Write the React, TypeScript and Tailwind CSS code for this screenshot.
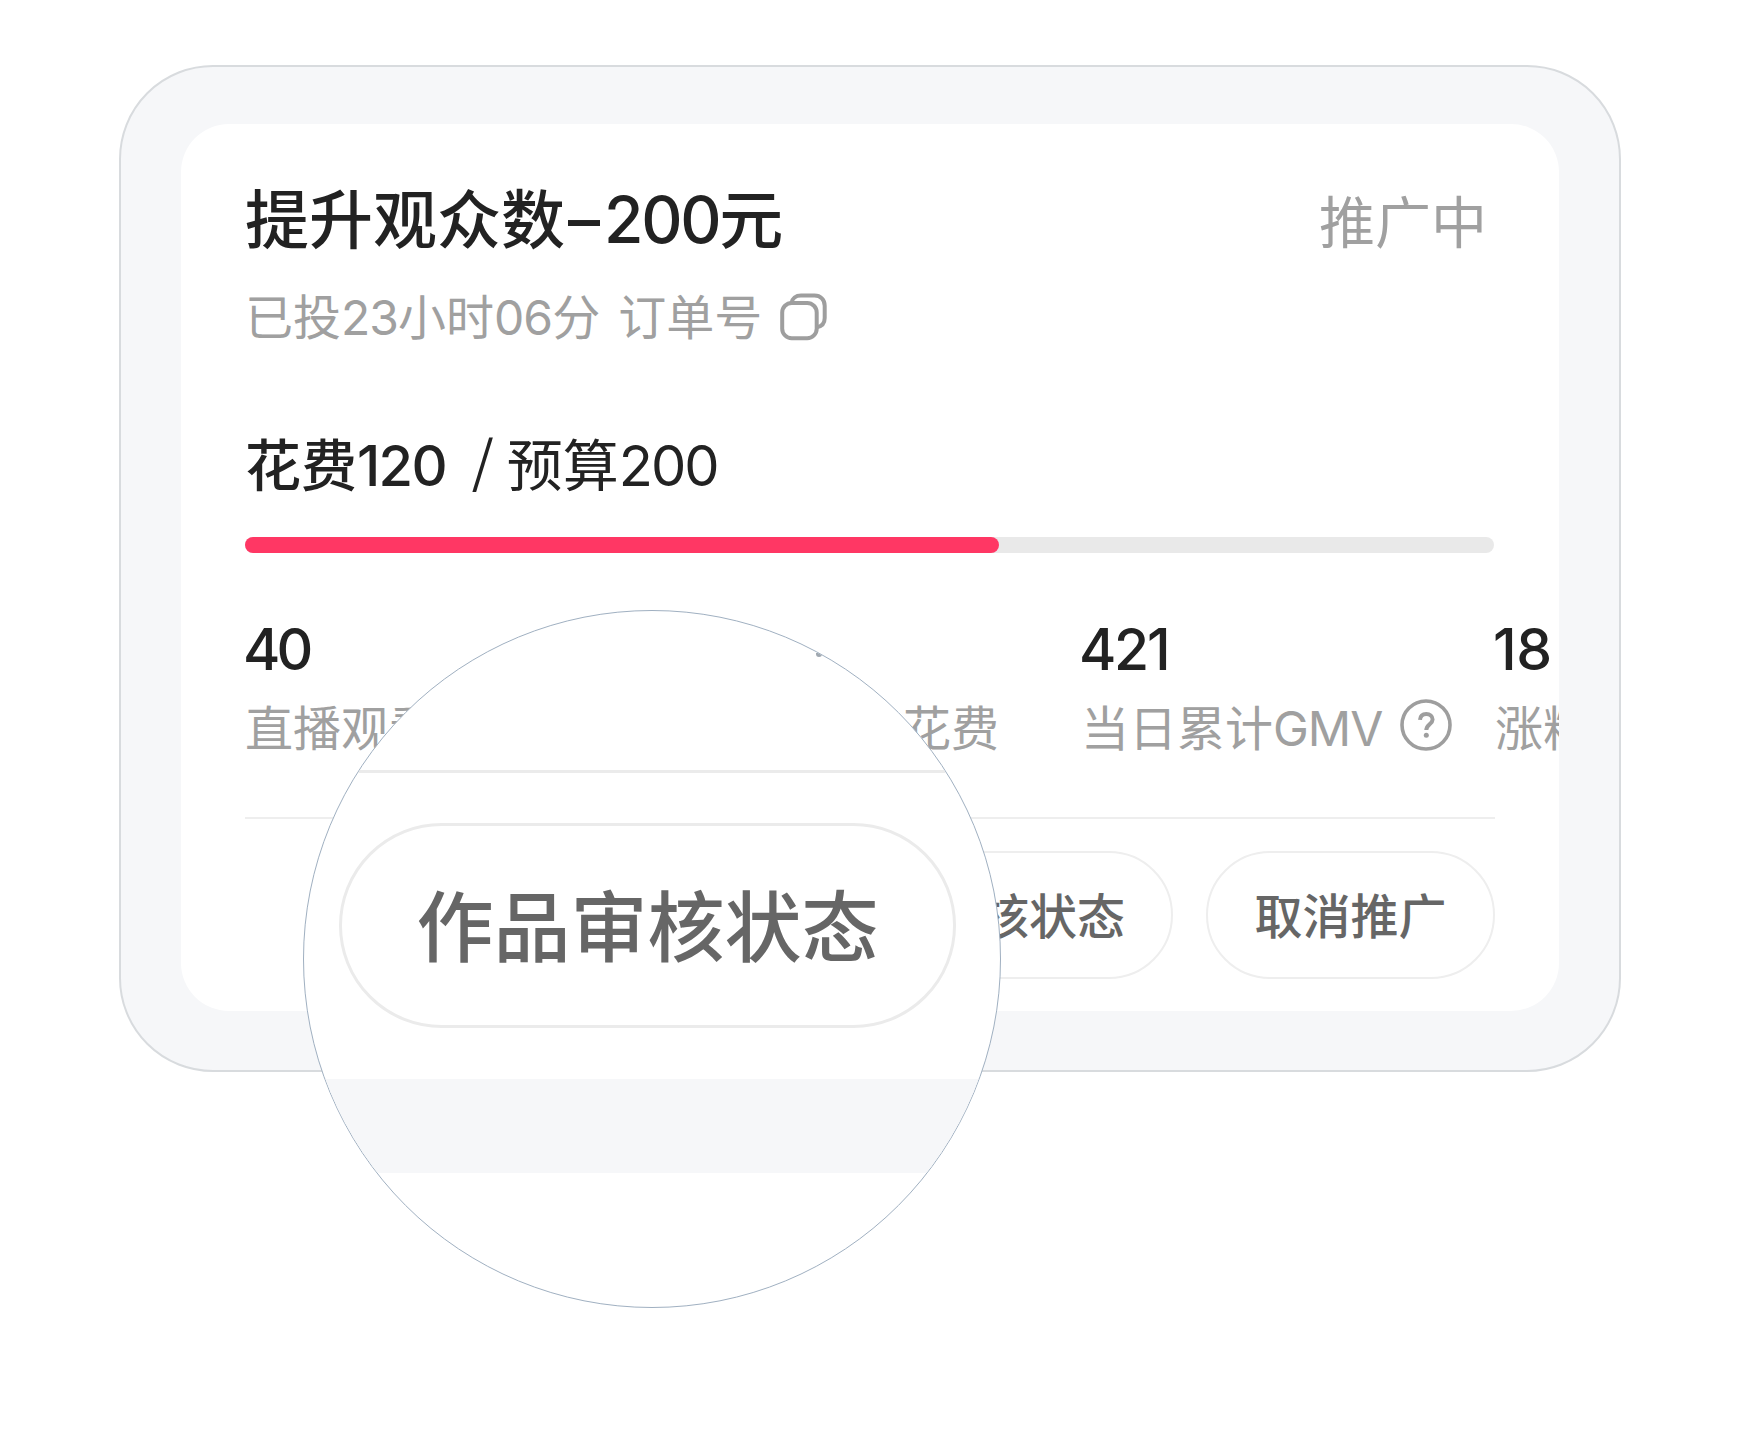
import clsx from 'clsx';

interface Stat {
    value: string;
    label: string;
    unit?: string;
    help?: boolean;
    className: string;
}

const stats: Stat[] = [
    { value: '40', label: '直播观看', className: 'w-[418px] tracking-[-4px]' },
    { value: '', label: '花费', className: 'w-[336px] mr-[82px] items-end' },
    { value: '421', label: '当日累计', unit: 'GMV', help: true, className: 'w-[414px] tracking-[-2.3px]' },
    { value: '18', label: '涨粉', className: 'w-[200px] tracking-[-0.5px]' },
];

const SPENT = 754;
const TRACK = 1249;

const CopyIcon = () => (
    <svg className="mb-[4px] ml-[17px] h-[49px] w-[49px] shrink-0" viewBox="0 0 49 49" fill="none" stroke="#9e9e9e" strokeWidth="4">
        <rect x="3.2" y="11" width="34.5" height="35.2" rx="9.5" />
        <path d="M12.5 11c.6-4.600 4.300-7.500 9.500-7.500h13.500c6 0 10.200 4.200 10.200 10.200V26c0 5-3 8.400-8 9.200" />
    </svg>
);

const HelpIcon = () => (
    <svg className="mb-[8px] ml-[18px] h-[52px] w-[52px] shrink-0" viewBox="0 0 52 52" fill="none" stroke="#9e9e9e" strokeWidth="3.6">
        <circle cx="26" cy="26" r="24" />
        <path d="M20 20.800c.3-3.800 2.800-5.900 6.300-5.900s6.300 2.200 6.300 5.500c0 4.600-6.300 5.400-6.300 10.700" strokeWidth="4" />
        <circle cx="26.3" cy="36.3" r="2.5" fill="#9e9e9e" stroke="none" />
    </svg>
);

const PillButton = ({ children, className = '' }: { children: string; className?: string }) => (
    <button
        className={clsx(
            'flex shrink-0 items-center justify-center whitespace-nowrap rounded-full font-medium text-[#666666]',
            className
        )}
    >
        {children}
    </button>
);

const StatItem = ({ value, label, unit, help, className }: Stat) => (
    <div className={clsx('flex shrink-0 flex-col', className)}>
        <div className="-ml-[2px] h-[64px] text-[57px] font-medium leading-[64px] text-[#222222]">{value}</div>
        <div className="mt-[19px] flex h-[56px] items-center whitespace-nowrap text-[48px] leading-[56px] tracking-normal text-[#a0a0a0]">
            {label}
            {unit && <span className="tracking-[-0.02em]">{unit}</span>}
            {help && <HelpIcon />}
        </div>
    </div>
);

// Magnified view of the review status button
const Lens = () => (
    <div className="absolute left-[303px] top-[610px] h-[698px] w-[698px] overflow-hidden rounded-full border border-[#a0b0c1] bg-white">
        <div className="mt-[159px] h-[3px] bg-[#ebebeb]" />
        <PillButton className="ml-[35px] mt-[50px] h-[205px] w-[617px] border-[3px] border-[#ebebeb] pt-[6px] text-[77px]">
            作品审核状态
        </PillButton>
        <div className="mt-[51px] h-[94px] bg-[#f6f7f9]" />
        <div className="absolute left-[512px] top-[42px] h-[4px] w-[6px] rounded-b-full bg-[#a0a8b0]" />
    </div>
);

const App = () => (
    <div className="relative h-[1434px] w-[1743px] overflow-hidden bg-white pl-[119px] pt-[65px] font-['Inter','Noto_Sans_CJK_SC',sans-serif]">
        <div className="h-[1007px] w-[1502px] rounded-[94px] border-2 border-[#d8dbde] bg-[#f6f7f9] pl-[60px] pt-[57px]">
            <div className="h-[887px] w-[1378px] overflow-hidden rounded-[48px] bg-white pl-[64px] pt-[60px]">
                <div className="flex h-[72px] w-[1242px] items-center justify-between">
                    <h1 className="text-[64px] font-medium leading-[72px] text-[#222222]">
                        提升观众数<span className="ml-[3px] mr-[4px]">–</span>
                        <span className="tracking-[-0.035em]">200</span>元
                    </h1>
                    <span className="pt-[6px] text-[56px] leading-[72px] text-[#a0a0a0]">推广中</span>
                </div>

                <div className="mt-[34px] flex h-[56px] items-center text-[48px] leading-[56px] text-[#a0a0a0]">
                    <span>
                        已投<span className="tracking-[-0.02em]">23</span>小时<span className="tracking-[-0.02em]">06</span>分
                    </span>
                    <span className="ml-[18px]">订单号</span>
                    <CopyIcon />
                </div>

                <div className="mt-[84px] flex h-[72px] items-center text-[56px] leading-[72px] text-[#222222]">
                    <span className="font-medium">
                        花费<span className="tracking-[-0.03em]">120</span>
                    </span>
                    <span className="ml-[26px] pb-[16px] font-['Noto_Sans_CJK_SC',sans-serif]">/</span>
                    <span className="ml-[13px]">
                        预算<span className="tracking-[-0.035em]">200</span>
                    </span>
                </div>

                <div className="mt-[35px] h-[16px] w-[1249px] rounded-full bg-[#e9e9e9]">
                    <div className="h-full rounded-full bg-[#ff3764]" style={{ width: `${(SPENT / TRACK) * 100}%` }} />
                </div>

                <div className="mt-[65px] flex">
                    {stats.map((stat) => (
                        <StatItem key={stat.label} {...stat} />
                    ))}
                </div>

                <div className="mt-[60px] flex w-[1250px] justify-end gap-[33px] border-t-2 border-[#eeeeee] pt-[32px]">
                    <PillButton className="h-[128px] w-[386px] border-2 border-[#eeeeee] pl-[2px] pt-[4px] text-[48px]">作品审核状态</PillButton>
                    <PillButton className="h-[128px] w-[289px] border-2 border-[#eeeeee] pt-[4px] text-[48px]">取消推广</PillButton>
                </div>
            </div>
        </div>
        <Lens />
    </div>
);

export default App;
